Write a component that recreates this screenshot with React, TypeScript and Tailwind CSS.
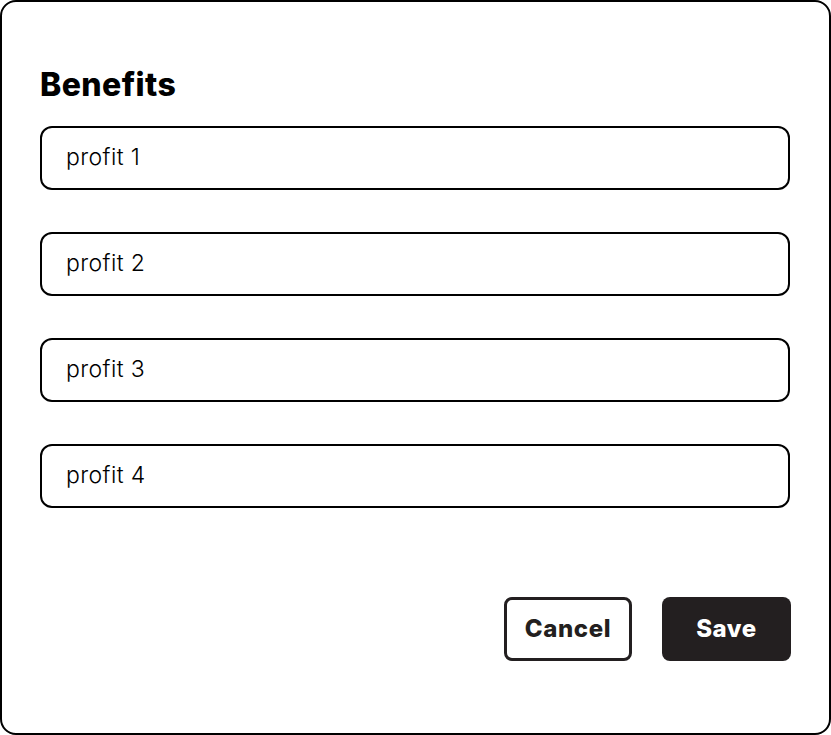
import React from 'react'

const items = ['profit 1', 'profit 2', 'profit 3', 'profit 4']

function App() {
  return (
    <div className="w-[831px] h-[735px] bg-white" style={{ fontFamily: 'Inter, "Noto Sans", sans-serif' }}>
      <div className="w-[831px] h-[735px] border-2 border-black rounded-[16px] px-[38px] pt-[63px] flex flex-col">
        <h2 className="text-[32px] leading-[40px] font-extrabold text-black tracking-[0.4px]">Benefits</h2>
        <div className="flex flex-col gap-[42px] mt-[21px]">
          {items.map((t) => (
            <div key={t} className="h-[64px] w-[750px] border-2 border-black rounded-[12px] flex items-center pl-[24px]">
              <span className="text-[23px] font-light text-black tracking-[0.4px] -mt-[2px]">{t}</span>
            </div>
          ))}
        </div>
        <div className="flex justify-end gap-[30px] mt-[89px] w-[751px]">
          <button className="w-[128px] h-[64px] border-[3px] border-[#231f20] rounded-[8px] text-[24px] font-extrabold tracking-[0.6px] text-[#231f20]">Cancel</button>
          <button className="w-[129px] h-[64px] bg-[#231f20] rounded-[8px] text-[24px] font-extrabold tracking-[0.6px] text-white">Save</button>
        </div>
      </div>
    </div>
  )
}

export default App
